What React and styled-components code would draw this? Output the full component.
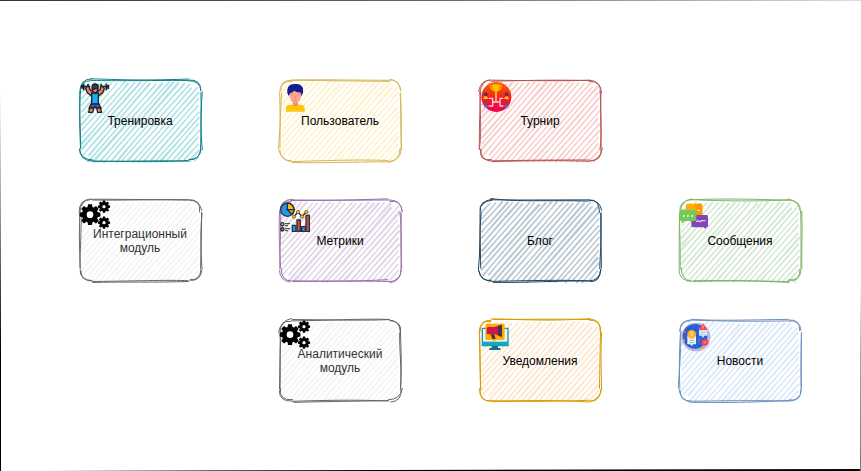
import React from "react";
import styled, { createGlobalStyle } from "styled-components";

const GlobalStyle = createGlobalStyle`
  body {
    margin: 0;
    background: #ffffff;
    font-family: "Liberation Sans", Arial, Helvetica, sans-serif;
  }
`;

const Page = styled.main`
  box-sizing: border-box;
  min-height: 100vh;
  padding: 80px 61px 69px 80px;
  background:
    linear-gradient(to right, #333, #666 50%, #ddd) top / 100% 1px no-repeat,
    linear-gradient(to bottom, #fff 20%, #999 45%, #000 75%) left / 1px 100% no-repeat,
    linear-gradient(to bottom, #fff 60%, #aaa 75%, #777) right / 1px 100% no-repeat,
    linear-gradient(to right, #fff 5%, #666 25%, #000 45%) bottom / 100% 1px no-repeat,
    linear-gradient(to right, #fff 45%, #777 70%, #000) bottom / 100% 2px no-repeat,
    #fff;
`;

const Board = styled.div`
  display: grid;
  grid-template-columns: repeat(4, minmax(0, 120px));
  justify-content: space-between;
  row-gap: 40px;
`;

const Card = styled.section`
  grid-column: ${(p) => p.$column};
  grid-row: ${(p) => p.$row};
  position: relative;
  display: flex;
  align-items: center;
  justify-content: center;
  min-height: 80px;
`;

const Sketch = styled.svg`
  position: absolute;
  inset: 0;
  width: 100%;
  height: 100%;
  overflow: visible;
  fill: none;
`;

const Icon = styled.svg`
  position: absolute;
  top: 0;
  left: 0;
  width: 32px;
  height: 33px;
  overflow: visible;
`;

const Label = styled.h2`
  position: relative;
  margin: 2px 0 0;
  font-size: 12px;
  font-weight: 400;
  line-height: 14px;
  text-align: center;
  color: ${(p) => p.$color};
`;

function createRandom(seed) {
  let s = seed;
  return () => {
    s = Math.imul(48271, s) & 0x7fffffff;
    return s / 0x7fffffff;
  };
}

const n = (v) => v.toFixed(2);

// A straight stroke drawn twice with a slight bow, like a quick pen line.
function penLine(rand, x1, y1, x2, y2, spread) {
  const len = Math.hypot(x2 - x1, y2 - y1);
  const reach = Math.min(spread, len / 10);
  const off = (v) => (rand() * 2 - 1) * v;
  return [reach, reach / 2]
    .map((r) => {
      const t = 0.2 + rand() * 0.2;
      const mx = off((spread * (y2 - y1)) / 200);
      const my = off((spread * (x1 - x2)) / 200);
      const p = [
        x1 + off(r), y1 + off(r),
        mx + x1 + (x2 - x1) * t + off(r), my + y1 + (y2 - y1) * t + off(r),
        mx + x1 + 2 * (x2 - x1) * t + off(r), my + y1 + 2 * (y2 - y1) * t + off(r),
        x2 + off(r), y2 + off(r),
      ].map(n);
      return `M${p[0]} ${p[1]}C${p.slice(2).join(" ")}`;
    })
    .join("");
}

function penCorner(rand, x1, y1, cx, cy, x2, y2) {
  const off = () => (rand() * 2 - 1) * 1.6;
  return [0, 1]
    .map((i) => {
      const sx = x1 + (i ? off() : 0);
      const sy = y1 + (i ? off() : 0);
      return `M${n(sx)} ${n(sy)}Q${n(cx + off())} ${n(cy + off())} ${n(x2 + off())} ${n(y2 + off())}`;
    })
    .join("");
}

function outline(rand, w, h, r) {
  return [
    penLine(rand, r, 0, w - r, 0, 1.6),
    penCorner(rand, w - r, 0, w, 0, w, r),
    penLine(rand, w, r, w, h - r, 1.6),
    penCorner(rand, w, h - r, w, h, w - r, h),
    penLine(rand, w - r, h, r, h, 1.6),
    penCorner(rand, r, h, 0, h, 0, h - r),
    penLine(rand, 0, h - r, 0, r, 1.6),
    penCorner(rand, 0, r, 0, 0, r, 0),
  ].join("");
}

function hatch(rand, w, h) {
  const slope = Math.tan((49 * Math.PI) / 180);
  const step = 4.2 / Math.sin((49 * Math.PI) / 180);
  let d = "";
  for (let x = 6; x < w + h / slope - 3; x += step) {
    const top = x > w ? (x - w) * slope : 0;
    const bottom = Math.min(h, x * slope);
    let y1 = top;
    let y2 = bottom;
    if (x > w - 4 && x < w + 6) y1 = Math.max(y1, 4);
    if (x - h / slope > -6 && x - h / slope < 4) y2 = Math.min(y2, h - 4);
    const start = y1 + 1 + rand() * 2;
    const end = y2 + (y2 > h - 2 ? rand() * 2 : -1);
    d += penLine(rand, x - start / slope, start, x - end / slope, end, 1);
  }
  return d;
}

function SketchBox({ seed, fill, stroke }) {
  const rand = createRandom(seed * 7919);
  return (
    <Sketch viewBox="0 0 120 80" preserveAspectRatio="none" aria-hidden="true">
      <path d={hatch(rand, 120, 80)} stroke={fill} strokeWidth="1.4" transform="translate(0.5 0.5)" />
      <path d={outline(rand, 121, 81, 12)} stroke={stroke} strokeWidth="1" />
    </Sketch>
  );
}

function IconFrame({ children }) {
  return <Icon viewBox="0 0 96 99" aria-hidden="true">{children}</Icon>;
}

function AthleteIcon() {
  return (
    <IconFrame>
      <g stroke="#202329" strokeWidth="4" strokeLinejoin="round">
        <path d="M3 20H31M59 20H87" strokeWidth="5" />
        <path d="M6 15V26M11 11V31M24 12V29M64 12V28M79 11V31M85 14V27" strokeWidth="5" />
        <path d="M20 20L26 18L30 29L40 36L37 50L22 38L17 26ZM68 20L63 18L60 29L49 36L53 50L68 38L73 26Z" fill="#e58265" />
        <path d="M37 21H53V31L49 38H41L37 31Z" fill="#e58265" />
        <path d="M37 24V15Q45 9 54 15V26H45L38 29Z" fill="#343a46" />
        <path d="M35 39H40Q45 43 50 39H55V73H35Z" fill="#13b1f4" />
        <path d="M33 72H57L63 85H49L45 80L41 85H27Z" fill="#4355bd" />
        <path d="M29 84H41L38 97H26ZM50 84H61L65 97H53Z" fill="#ee8b73" />
      </g>
    </IconFrame>
  );
}

function UserIcon() {
  return (
    <IconFrame>
      <path d="M18 95V84Q18 75 30 74H62Q74 75 74 84V95Z" fill="#ffc40c" />
      <path d="M38 62H54V74Q46 85 38 74Z" fill="#f28d70" />
      <path d="M28 32Q46 22 64 32V46Q63 67 46 69Q29 67 28 46Z" fill="#ffa78c" />
      <path d="M26 48Q20 40 22 28Q25 12 45 12Q63 10 69 25Q72 37 65 49L61 37Q51 38 42 32Q38 39 31 39Z" fill="#171c91" />
      <path d="M33 45Q37 42 41 45M51 45Q55 42 59 45M46 47L44 54H48M41 60Q46 64 51 60" fill="none" stroke="#df765f" strokeWidth="2" />
    </IconFrame>
  );
}

function TournamentIcon() {
  return (
    <IconFrame>
      <defs>
        <linearGradient id="tournament-red" x1="0" y1="0" x2="0" y2="1">
          <stop stopColor="#ff6500" />
          <stop offset=".55" stopColor="#f51b22" />
          <stop offset="1" stopColor="#ed0052" />
        </linearGradient>
      </defs>
      <circle cx="49" cy="51" r="45" fill="url(#tournament-red)" />
      <path d="M37 13H59V24Q57 34 48 37Q39 34 37 24ZM45 36H51V50H45Z" fill="#ffc000" />
      <path d="M37 17H32Q31 28 41 30M59 17H64Q65 28 55 30" fill="none" stroke="#ffaf00" strokeWidth="4" />
      <path d="M48 48V66M26 55H38V78H26M70 55H60V78H70M38 66H60" fill="none" stroke="#ffd0dc" strokeWidth="4" />
      <path d="M9 57Q13 45 20 49L25 57ZM72 57Q76 45 84 50L87 58Z" fill="#ffc22c" />
      <path d="M10 82Q16 70 25 82ZM72 82Q79 70 87 82Z" fill="#318ef2" />
      <circle cx="17" cy="43" r="6" fill="#653541" />
      <circle cx="80" cy="43" r="6" fill="#653541" />
      <circle cx="17" cy="72" r="5" fill="#7345a0" />
      <circle cx="80" cy="72" r="5" fill="#6944a1" />
    </IconFrame>
  );
}

function Gear({ x, y, radius, hole }) {
  const teeth = Array.from({ length: 8 }, (_, i) => i * 45);
  return (
    <g transform={`translate(${x} ${y})`}>
      <circle r={(radius + hole) / 2} fill="none" stroke="#000" strokeWidth={radius - hole} />
      {teeth.map((angle) => (
        <path key={angle} transform={`rotate(${angle})`} d={`M${-radius * 0.32} ${-radius + 3}L${-radius * 0.24} ${-radius * 1.3}H${radius * 0.24}L${radius * 0.32} ${-radius + 3}Z`} fill="#000" />
      ))}
    </g>
  );
}

function GearsIcon() {
  return (
    <IconFrame>
      <Gear x={30} y={44} radius={24} hole={10} />
      <Gear x={72} y={20} radius={14} hole={5} />
      <Gear x={72} y={68} radius={14} hole={5} />
    </IconFrame>
  );
}

function MetricsIcon() {
  return (
    <IconFrame>
      <g stroke="#263442" strokeWidth="4">
        <circle cx="22" cy="29" r="20" fill="#2196f3" />
        <path d="M22 9A20 20 0 0 1 42 29H22Z" fill="#ffba16" />
        <path d="M22 29H42A20 20 0 0 1 36 43Z" fill="#f5a300" />
        <path d="M42 50L54 36L66 50L79 36" fill="none" />
        <path d="M37 76H48V94H37ZM65 80H76V94H65Z" fill="#2196f3" />
        <path d="M51 60H61V94H51ZM78 46H88V94H78Z" fill="#e64b32" />
        <circle cx="7" cy="73" r="5" fill="#ffb514" />
        <circle cx="7" cy="88" r="5" fill="#e64b32" />
        <path d="M15 71H30M15 77H24M15 86H30M15 92H24" strokeWidth="3" />
      </g>
      <g fill="#ffb514" stroke="#66501e" strokeWidth="2">
        <circle cx="42" cy="50" r="5" /><circle cx="54" cy="36" r="5" />
        <circle cx="66" cy="50" r="5" /><circle cx="79" cy="36" r="5" />
      </g>
    </IconFrame>
  );
}

function MessagesIcon() {
  return (
    <IconFrame>
      <path d="M23 11H62Q67 11 67 17V40Q67 45 61 45H28L18 50V17Q18 11 23 11Z" fill="#ffb000" />
      <path d="M45 11H62Q67 11 67 17V45H48Z" fill="#ff9800" />
      <path d="M52 31H59" stroke="#fff3bf" strokeWidth="4" />
      <path d="M39 45H80Q84 45 84 50V78Q84 82 79 82H78V87L70 82H40Q34 82 34 77V50Q34 45 39 45Z" fill="#8146b5" />
      <path d="M48 65L54 62L60 65L66 62L76 62" fill="none" stroke="#e7cdf5" strokeWidth="4" />
      <path d="M5 29H44Q49 29 49 35V58Q49 63 43 63H14L5 71V64Q-1 63-1 57V34Q0 29 5 29Z" fill="#76c957" />
      <path d="M9 48H14M21 48H26M34 48H39" stroke="#fff" strokeWidth="5" />
    </IconFrame>
  );
}

function NotificationsIcon() {
  return (
    <IconFrame>
      <path d="M35 77H54V84H61V90H28V84H35Z" fill="#15718a" />
      <path d="M7 25H84V77H7Z" fill="#e7f5f8" stroke="#1297b3" strokeWidth="4" />
      <path d="M6 65H85V76H6Z" fill="#16a6c3" />
      <path d="M20 11H70Q74 11 74 16V55Q74 60 69 60H48L41 66L37 60H20Q16 60 16 55V16Q16 11 20 11Z" fill="#ffad00" />
      <path d="M24 21H43L65 14V51L45 43H24Q20 43 20 38V26Q20 21 24 21Z" fill="#cf1456" />
      <path d="M54 18L66 14V51L54 46ZM31 43H43L47 57H37Z" fill="#443447" />
    </IconFrame>
  );
}

function NewsIcon() {
  return (
    <IconFrame>
      <circle cx="48" cy="51" r="43" fill="#b9b5df" />
      <circle cx="45" cy="49" r="37" fill="#205ed5" />
      <path d="M14 32Q39 49 79 30M9 52H82M17 72Q43 58 75 76M43 12Q25 48 44 86M53 13Q72 45 49 85" fill="none" stroke="#4476df" strokeWidth="2" />
      <path d="M22 47H48V73H39L35 79L31 73H22Z" fill="#e8f3fc" />
      <circle cx="35" cy="43" r="13" fill="#ffb52b" />
      <path d="M35 36V48" stroke="#ffe09a" strokeWidth="4" />
      <path d="M28 61H42M28 68H42" stroke="#6bcfc5" strokeWidth="3" />
      <path d="M57 25H82V47H73L69 54L65 47H57Z" fill="#c4ebf1" />
      <path d="M56 30L69 9L83 30Z" fill="#ff444c" />
      <path d="M69 16V26M62 38H76" stroke="#ffaeb3" strokeWidth="3" />
      <circle cx="75" cy="67" r="10" fill="#fa4057" />
      <path d="M72 64L78 70M78 64L72 70" stroke="#ffc2cc" strokeWidth="2" />
      <circle cx="11" cy="62" r="4" fill="#ffa22c" /><circle cx="68" cy="82" r="5" fill="#ff9e4a" />
      <circle cx="14" cy="37" r="4" fill="#ef4269" /><circle cx="57" cy="61" r="3" fill="#ff4b52" />
    </IconFrame>
  );
}

const modules = [
  { name: "Тренировка", column: 1, row: 1, fill: "#b0e3e6", stroke: "#0e8088", icon: AthleteIcon },
  { name: "Пользователь", column: 2, row: 1, fill: "#fff2cc", stroke: "#d6b656", icon: UserIcon },
  { name: "Турнир", column: 3, row: 1, fill: "#f8cecc", stroke: "#b85450", icon: TournamentIcon },
  { name: "Интеграционный модуль", column: 1, row: 2, fill: "#f5f5f5", stroke: "#666666", color: "#333333", icon: GearsIcon },
  { name: "Метрики", column: 2, row: 2, fill: "#e1d5e7", stroke: "#9673a6", icon: MetricsIcon },
  { name: "Блог", column: 3, row: 2, fill: "#bac8d3", stroke: "#23445d" },
  { name: "Сообщения", column: 4, row: 2, fill: "#d5e8d4", stroke: "#82b366", icon: MessagesIcon },
  { name: "Аналитический модуль", column: 2, row: 3, fill: "#f5f5f5", stroke: "#666666", color: "#333333", icon: GearsIcon },
  { name: "Уведомления", column: 3, row: 3, fill: "#ffe6cc", stroke: "#d79b00", icon: NotificationsIcon },
  { name: "Новости", column: 4, row: 3, fill: "#dae8fc", stroke: "#6c8ebf", icon: NewsIcon },
];

export default function App() {
  return (
    <>
      <GlobalStyle />
      <Page>
        <Board>
          {modules.map(({ name, column, row, fill, stroke, color = "#000000", icon: ModuleIcon }, index) => (
            <Card key={name} $column={column} $row={row}>
              <SketchBox seed={index + 3} fill={fill} stroke={stroke} />
              {ModuleIcon && <ModuleIcon />}
              <Label $color={color}>{name}</Label>
            </Card>
          ))}
        </Board>
      </Page>
    </>
  );
}
